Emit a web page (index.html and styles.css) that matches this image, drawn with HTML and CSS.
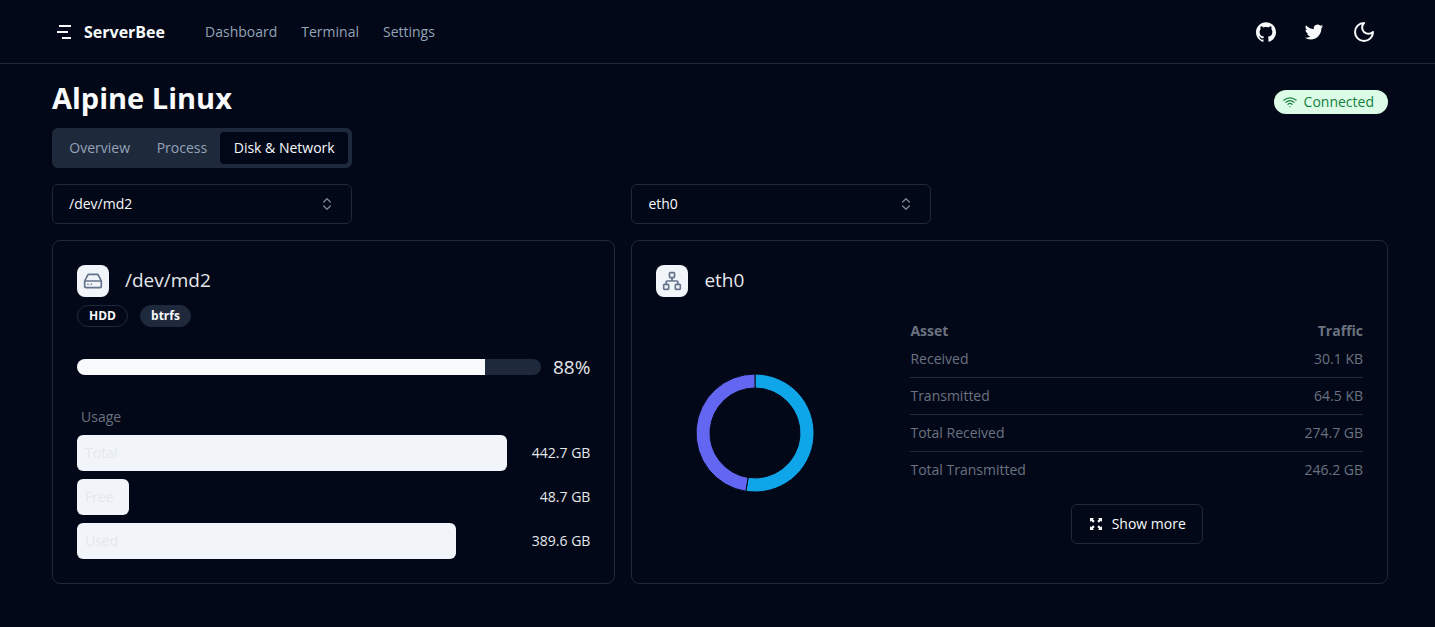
FILE: index.html
```html
<!DOCTYPE html>
<html lang="en">
<head>
<meta charset="utf-8">
<meta name="viewport" content="width=device-width, initial-scale=1">
<title>ServerBee</title>
<link rel="stylesheet" href="styles.css">
</head>
<body>
<header class="header">
  <a class="brand" href="#">
    <svg class="brand-logo" viewBox="0 0 24 24" aria-hidden="true"><path d="M7 6h12M5 12h11M10 18h9"/></svg>
    <span>ServerBee</span>
  </a>
  <nav class="nav">
    <a href="#">Dashboard</a>
    <a href="#">Terminal</a>
    <a href="#">Settings</a>
  </nav>
  <div class="actions">
    <a class="action" href="#" aria-label="GitHub"><svg class="fill-icon" viewBox="0 0 24 24"><path d="M12 .297c-6.63 0-12 5.373-12 12 0 5.303 3.438 9.8 8.205 11.385.6.113.82-.258.82-.577 0-.285-.01-1.04-.015-2.04-3.338.724-4.042-1.61-4.042-1.61C4.422 18.07 3.633 17.7 3.633 17.7c-1.087-.744.084-.729.084-.729 1.205.084 1.838 1.236 1.838 1.236 1.07 1.835 2.809 1.305 3.495.998.108-.776.417-1.305.76-1.605-2.665-.3-5.466-1.332-5.466-5.93 0-1.31.465-2.38 1.235-3.22-.135-.303-.54-1.523.105-3.176 0 0 1.005-.322 3.3 1.23.96-.267 1.98-.399 3-.405 1.02.006 2.04.138 3 .405 2.28-1.552 3.285-1.23 3.285-1.23.645 1.653.24 2.873.12 3.176.765.84 1.23 1.91 1.23 3.22 0 4.61-2.805 5.625-5.475 5.92.42.36.81 1.096.81 2.22 0 1.606-.015 2.896-.015 3.286 0 .315.21.69.825.57C20.565 22.092 24 17.592 24 12.297c0-6.627-5.373-12-12-12"/></svg></a>
    <a class="action" href="#" aria-label="Twitter"><svg class="fill-icon" viewBox="-1 -1 26 26"><path d="M23.953 4.57a10 10 0 01-2.825.775 4.958 4.958 0 002.163-2.723c-.951.555-2.005.959-3.127 1.184a4.92 4.92 0 00-8.384 4.482C7.69 8.095 4.067 6.13 1.64 3.162a4.822 4.822 0 00-.666 2.475c0 1.71.87 3.213 2.188 4.096a4.904 4.904 0 01-2.228-.616v.06a4.923 4.923 0 003.946 4.827 4.996 4.996 0 01-2.212.085 4.936 4.936 0 004.604 3.417 9.867 9.867 0 01-6.102 2.105c-.39 0-.779-.023-1.17-.067a13.995 13.995 0 007.557 2.209c9.053 0 13.998-7.496 13.998-13.985 0-.21 0-.42-.015-.63A9.935 9.935 0 0024 4.59z"/></svg></a>
    <button class="action action-theme" type="button" aria-label="Toggle theme"><svg class="line-icon line-icon-lg" viewBox="0 0 24 24"><path d="M12 3a6 6 0 0 0 9 9 9 9 0 1 1-9-9Z"/></svg></button>
  </div>
</header>

<main class="page">
  <div class="title-row">
    <h1>Alpine Linux</h1>
    <span class="status">
      <svg class="line-icon" viewBox="0 0 24 24"><path d="M1.4 9a15.5 15.5 0 0 1 21.2 0M5 12.6a10 10 0 0 1 14 0M8.500 16.100a5 5 0 0 1 7 0M12 20h.01"/></svg>
      Connected
    </span>
  </div>

  <div class="tabs" role="tablist">
    <button type="button" role="tab" aria-selected="false">Overview</button>
    <button type="button" role="tab" aria-selected="false">Process</button>
    <button type="button" role="tab" aria-selected="true">Disk &amp; Network</button>
  </div>

  <div class="board">
    <div class="picker disk-col">
      <select aria-label="Disk"><option>/dev/md2</option></select>
      <svg class="line-icon" viewBox="0 0 24 24"><path d="m7 15 5 5 5-5M7 9l5-5 5 5"/></svg>
    </div>
    <div class="picker net-col">
      <select aria-label="Network interface"><option>eth0</option></select>
      <svg class="line-icon" viewBox="0 0 24 24"><path d="m7 15 5 5 5-5M7 9l5-5 5 5"/></svg>
    </div>

    <section class="card disk-col">
      <div class="card-head">
        <span class="card-icon"><svg class="line-icon" viewBox="0 0 24 24"><path d="M22 12H2M5.450 5.110 2 12v6a2 2 0 0 0 2 2h16a2 2 0 0 0 2-2v-6l-3.450-6.890A2 2 0 0 0 16.760 4H7.240a2 2 0 0 0-1.790 1.110zM6 16h.01M10 16h.01"/></svg></span>
        <h2>/dev/md2</h2>
      </div>
      <div class="badges">
        <span class="badge badge-outline">HDD</span>
        <span class="badge">btrfs</span>
      </div>
      <div class="progress">
        <div class="progress-track"><div class="progress-fill" style="width:88%"></div></div>
        <span class="progress-value">88%</span>
      </div>
      <h3 class="usage-title">Usage</h3>
      <ul class="usage">
        <li><div class="usage-track"><div class="usage-bar" style="width:100%">Total</div></div><span>442.7 GB</span></li>
        <li><div class="usage-track"><div class="usage-bar" style="width:12%">Free</div></div><span>48.7 GB</span></li>
        <li><div class="usage-track"><div class="usage-bar" style="width:88%">Used</div></div><span>389.6 GB</span></li>
      </ul>
    </section>

    <section class="card net-col">
      <div class="card-head">
        <span class="card-icon"><svg class="line-icon" viewBox="0 0 24 24"><rect x="16" y="16" width="6" height="6" rx="1"/><rect x="2" y="16" width="6" height="6" rx="1"/><rect x="9" y="2" width="6" height="6" rx="1"/><path d="M5 16v-3a1 1 0 0 1 1-1h12a1 1 0 0 1 1 1v3M12 12V8"/></svg></span>
        <h2>eth0</h2>
      </div>
      <div class="net-body">
        <svg class="donut" viewBox="0 0 120 120" role="img" aria-label="Total received and transmitted">
          <path class="slice-received" d="M60 1A59 59 0 1 1 50.900 118.290L53.100 104.470A45 45 0 1 0 60 15Z"/>
          <path class="slice-sent" d="M50.900 118.290A59 59 0 0 1 60 1V15A45 45 0 0 0 53.100 104.470Z"/>
        </svg>
        <div class="traffic-wrap">
          <table class="traffic">
            <thead><tr><th>Asset</th><th>Traffic</th></tr></thead>
            <tbody>
              <tr><td>Received</td><td>30.1 KB</td></tr>
              <tr><td>Transmitted</td><td>64.5 KB</td></tr>
              <tr><td>Total Received</td><td>274.7 GB</td></tr>
              <tr><td>Total Transmitted</td><td>246.2 GB</td></tr>
            </tbody>
          </table>
          <button class="more" type="button">
            <svg class="expand-icon" viewBox="0 0 16 16"><path d="M2 2h4L4.800 3.200l1.900 1.900-1.600 1.600-1.900-1.900L2 6zM14 2v4l-1.200-1.200-1.900 1.900-1.600-1.600 1.900-1.900L10 2zM2 14v-4l1.200 1.200 1.900-1.900 1.600 1.600-1.900 1.900L6 14zM14 14h-4l1.200-1.200-1.900-1.900 1.600-1.600 1.900 1.900L14 10z"/></svg>
            Show more
          </button>
        </div>
      </div>
    </section>
  </div>
</main>
</body>
</html>
```
FILE: styles.css
```css
:root {
  --bg: #020817;
  --fg: #f8fafc;
  --line: #1e293b;
  --muted: #94a3b8;
  --gray: #6b7280;
  --pale: #f1f5f9;
}

* {
  box-sizing: border-box;
  margin: 0;
  padding: 0;
}

body {
  background: var(--bg);
  color: var(--fg);
  font: 14px/20px "Segoe UI", "Open Sans", sans-serif;
}

a {
  color: inherit;
  text-decoration: none;
}

button,
select {
  font: inherit;
  color: inherit;
  background: none;
  border: 0;
  cursor: pointer;
}

ul {
  list-style: none;
}

svg {
  display: block;
  flex: none;
}

.line-icon,
.brand-logo {
  width: 16px;
  height: 16px;
  fill: none;
  stroke: currentColor;
  stroke-width: 2;
  stroke-linecap: round;
  stroke-linejoin: round;
}

.brand-logo {
  width: 24px;
  height: 24px;
  stroke-linecap: butt;
}

.line-icon-lg {
  width: 24px;
  height: 24px;
}

.fill-icon {
  width: 20px;
  height: 20px;
  fill: currentColor;
}

.expand-icon {
  width: 16px;
  height: 16px;
  fill: currentColor;
}

.header {
  display: flex;
  align-items: center;
  height: 64px;
  padding: 0 51px 0 52px;
  border-bottom: 1px solid var(--line);
}

.brand {
  display: flex;
  align-items: center;
  gap: 8px;
  font-size: 16px;
  font-weight: 700;
}

.nav {
  display: flex;
  gap: 24px;
  margin-left: 40px;
  color: var(--muted);
}

.actions {
  display: flex;
  gap: 8px;
  margin-left: auto;
}

.action {
  display: grid;
  place-items: center;
  width: 40px;
  height: 40px;
}

.action-theme {
  margin-left: 2px;
}

.page {
  padding: 16px 47px 43px 52px;
}

.title-row {
  display: flex;
  align-items: center;
  justify-content: space-between;
}

h1 {
  font-size: 29px;
  line-height: 36px;
  font-weight: 700;
}

.status {
  display: flex;
  align-items: center;
  gap: 7px;
  height: 24px;
  margin-top: 8px;
  padding: 0 14px 0 9px;
  border-radius: 12px;
  background: #dcfce7;
  color: #15803d;
}

.status .line-icon {
  width: 14px;
  height: 14px;
}

.tabs {
  display: flex;
  max-width: 300px;
  height: 40px;
  margin: 12px 0 16px;
  padding: 4px;
  border-radius: 6px;
  background: var(--line);
  color: var(--muted);
}

.tabs button {
  flex: 1 0 auto;
  padding: 0 12px;
  border-radius: 4px;
}

.tabs button[aria-selected="true"] {
  background: var(--bg);
  color: var(--fg);
  font-weight: 500;
}

.board {
  display: grid;
  grid-template-columns: repeat(7, minmax(0, 1fr));
  gap: 16px;
}

.disk-col {
  grid-column: span 3;
}

.net-col {
  grid-column: span 4;
}

.picker {
  display: grid;
  align-items: center;
  max-width: 300px;
}

.picker > * {
  grid-area: 1 / 1;
}

.picker select {
  width: 100%;
  height: 40px;
  padding: 0 16px;
  border: 1px solid var(--line);
  border-radius: 6px;
  font-weight: 500;
  appearance: none;
}

.picker svg {
  justify-self: end;
  margin-right: 17px;
  opacity: .5;
  pointer-events: none;
}

.card {
  padding: 24px;
  border: 1px solid var(--line);
  border-radius: 8px;
}

.card-head {
  display: flex;
  gap: 16px;
}

.card-icon {
  display: grid;
  place-items: center;
  width: 32px;
  height: 32px;
  border-radius: 8px;
  background: var(--pale);
  color: #64748b;
}

.card-icon svg {
  width: 20px;
  height: 20px;
}

h2 {
  font-size: 19px;
  line-height: 30px;
  font-weight: 400;
  color: #e5e7eb;
}

.badges {
  display: flex;
  gap: 12px;
  margin-top: 8px;
}

.badge {
  min-width: 51px;
  padding: 2px 8px;
  border: 1px solid var(--line);
  border-radius: 11px;
  background: var(--line);
  font-size: 12px;
  line-height: 16px;
  font-weight: 700;
  text-align: center;
}

.badge-outline {
  background: none;
}

.progress {
  display: flex;
  align-items: center;
  gap: 12px;
  margin-top: 26px;
}

.progress-track {
  flex: 1;
  height: 16px;
  border-radius: 8px;
  background: var(--line);
  overflow: hidden;
}

.progress-fill {
  height: 100%;
  background: var(--fg);
}

.progress-value {
  font-size: 19px;
  line-height: 28px;
  color: #e5e7eb;
}

.usage-title {
  margin: 26px 0 8px 4px;
  font-size: 14px;
  font-weight: 400;
  color: var(--gray);
}

.usage {
  display: grid;
  gap: 8px;
}

.usage li {
  display: flex;
  align-items: center;
  color: #e5e7eb;
}

.usage li > span {
  width: 83px;
  text-align: right;
}

.usage-track {
  flex: 1;
}

.usage-bar {
  height: 36px;
  padding: 0 8px;
  border-radius: 6px;
  background: var(--pale);
  line-height: 36px;
}

.net-body {
  display: grid;
  grid-template-columns: minmax(0, 7fr) minmax(0, 16fr);
  align-items: center;
  gap: 56px;
  margin-top: 24px;
}

.donut {
  justify-self: center;
  width: 120px;
  height: 120px;
  stroke: var(--bg);
  stroke-width: 1;
}

.slice-received {
  fill: #0ea5e9;
}

.slice-sent {
  fill: #6366f1;
}

.traffic-wrap {
  display: grid;
  justify-items: center;
  gap: 16px;
}

.traffic {
  width: 100%;
  border-collapse: collapse;
  color: var(--gray);
}

.traffic th,
.traffic td {
  text-align: left;
}

.traffic td {
  padding: 8px 0;
}

.traffic tr > :last-child {
  text-align: right;
}

.traffic tbody tr + tr {
  border-top: 1px solid var(--line);
}

.more {
  display: flex;
  align-items: center;
  gap: 8px;
  height: 40px;
  padding: 0 16px;
  border: 1px solid var(--line);
  border-radius: 6px;
  font-weight: 500;
}
```
